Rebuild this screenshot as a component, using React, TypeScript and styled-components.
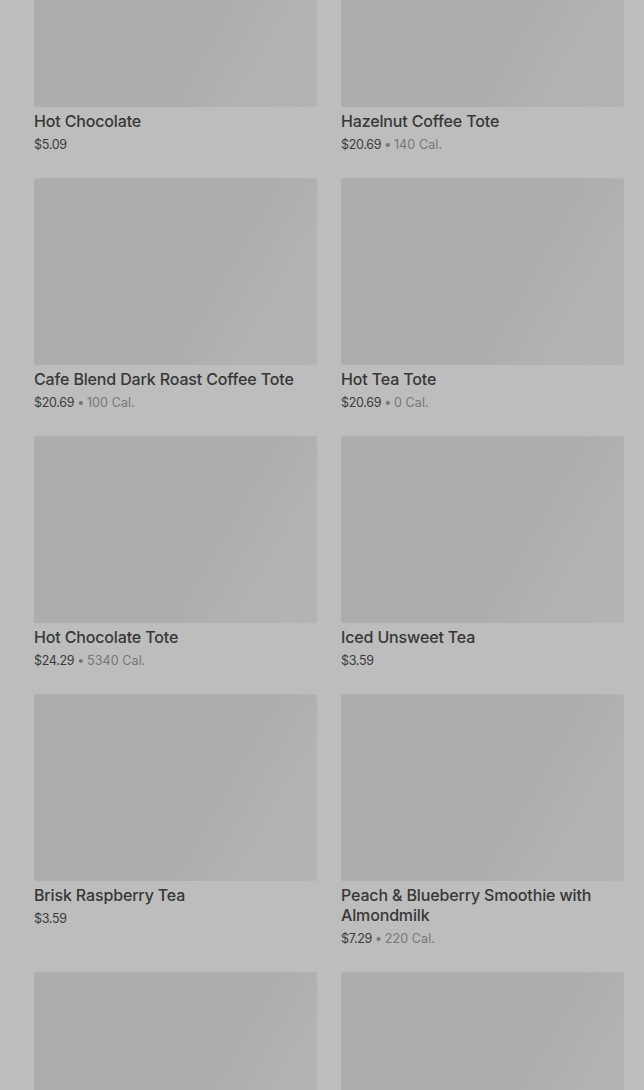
import React from 'react';
import styled, { createGlobalStyle } from 'styled-components';

const GlobalStyle = createGlobalStyle`
	html, body {
		margin: 0;
		padding: 0;
		background: #bdbdbd;
		font-family: Inter, 'Liberation Sans', sans-serif;
		overflow: hidden;
	}
`;

type Product = {
	name?: string;
	price?: string;
	cal?: string;
};

const products: Product[] = [
	{ name: 'Hot Chocolate', price: '$5.09' },
	{ name: 'Hazelnut Coffee Tote', price: '$20.69', cal: '140 Cal.' },
	{ name: 'Cafe Blend Dark Roast Coffee Tote', price: '$20.69', cal: '100 Cal.' },
	{ name: 'Hot Tea Tote', price: '$20.69', cal: '0 Cal.' },
	{ name: 'Hot Chocolate Tote', price: '$24.29', cal: '5340 Cal.' },
	{ name: 'Iced Unsweet Tea', price: '$3.59' },
	{ name: 'Brisk Raspberry Tea', price: '$3.59' },
	{ name: 'Peach & Blueberry Smoothie with Almondmilk', price: '$7.29', cal: '220 Cal.' },
	{},
	{},
];

const Page = styled.div`
	height: 1090px;
	overflow: hidden;
	background: #bdbdbd;
`;

const SGrid = styled.div`
	display: grid;
	grid-template-columns: 283px 283px;
	column-gap: 24px;
	row-gap: 24px;
	padding: 0 20px 0 34px;
	margin-top: -80px;
`;

const SCard = styled.div`
	display: flex;
	flex-direction: column;
`;

const SImage = styled.div`
	height: 187px;
	border-radius: 2px;
	background: linear-gradient(120deg, #adadad 0%, #adadad 62%, #b2b2b2 78%, #b3b3b3 100%);
	box-shadow: inset 0 1px 0 rgba(255, 255, 255, 0.06);
`;

const SName = styled.div`
	margin-top: 4px;
	font-size: 16px;
	line-height: 20px;
	font-weight: 500;
	color: #373737;
	letter-spacing: -0.15px;
`;

const SMeta = styled.div`
	margin-top: 5px;
	font-size: 12.5px;
	line-height: 18px;
	color: #3b3b3b;
	letter-spacing: -0.3px;
`;

const SCal = styled.span`
	color: #767676;
	letter-spacing: 0.1px;
`;

const SDot = styled.span`
	color: #767676;
	margin: 0 3px;
`;

const ProductCard = ({ item }: { item: Product }) => (
	<SCard>
		<SImage />
		{item.name && <SName>{item.name}</SName>}
		{item.price && (
			<SMeta>
				{item.price}
				{item.cal && (
					<>
						<SDot>•</SDot>
						<SCal>{item.cal}</SCal>
					</>
				)}
			</SMeta>
		)}
	</SCard>
);

export default function App() {
	return (
		<Page>
			<GlobalStyle />
			<SGrid>
				{products.map((p, i) => (
					<ProductCard key={i} item={p} />
				))}
			</SGrid>
		</Page>
	);
}
